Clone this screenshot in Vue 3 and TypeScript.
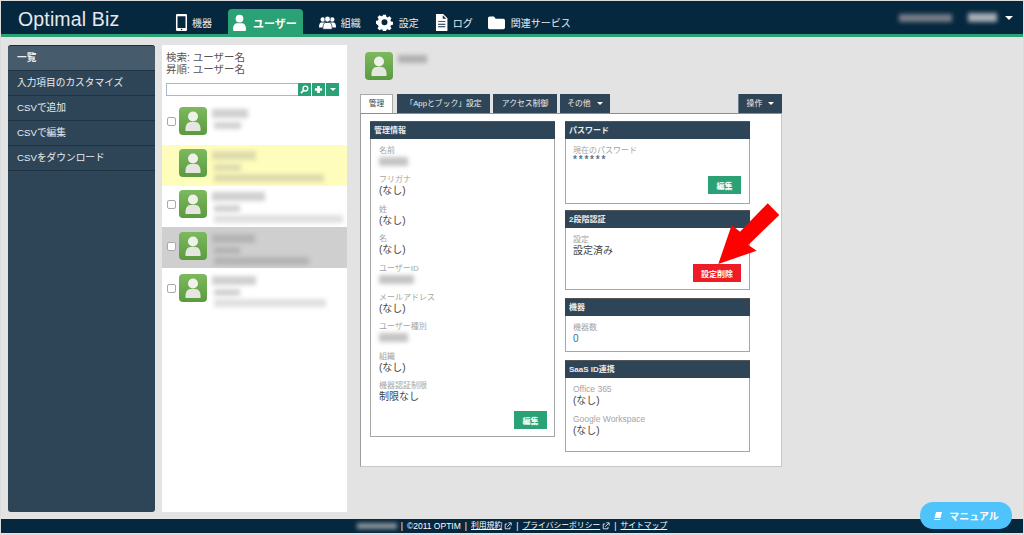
<script setup lang="ts">
interface NavItem { label: string; icon: string; active?: boolean }
const nav: NavItem[] = [
  { label: '機器', icon: 'phone' },
  { label: 'ユーザー', icon: 'user', active: true },
  { label: '組織', icon: 'group' },
  { label: '設定', icon: 'gear' },
  { label: 'ログ', icon: 'doc' },
  { label: '関連サービス', icon: 'folder' },
]
const menu = ['一覧', '入力項目のカスタマイズ', 'CSVで追加', 'CSVで編集', 'CSVをダウンロード']
const users = [
  { w: [36, 27], cls: '', check: true },
  { w: [44, 27, 110], cls: 'yellow', check: false },
  { w: [53, 26, 129], cls: '', check: true },
  { w: [43, 26, 95], cls: 'gray', check: true },
  { w: [44, 26, 112], cls: '', check: true },
]
const fields = [
  { l: '名前', b: 29 },
  { l: 'フリガナ', v: '(なし)' },
  { l: '姓', v: '(なし)' },
  { l: '名', v: '(なし)' },
  { l: 'ユーザーID', b: 35 },
  { l: 'メールアドレス', v: '(なし)' },
  { l: 'ユーザー種別', b: 29 },
  { l: '組織', v: '(なし)' },
  { l: '機器認証制限', v: '制限なし' },
]
</script>

<template>
  <div class="page">
    <header class="top">
      <div class="logo">Optimal Biz</div>
      <nav class="nav">
        <a v-for="n in nav" :key="n.label" class="nav-item" :class="{ active: n.active, ['i-' + n.icon]: true }">
          <svg class="nav-ic" viewBox="0 0 20 20" fill="#fff">
            <template v-if="n.icon === 'phone'">
              <path fill-rule="evenodd" d="M5 0h10a1.500 1.500 0 0 1 1.500 1.500v17A1.500 1.500 0 0 1 15 20H5a1.500 1.500 0 0 1-1.500-1.500v-17A1.500 1.500 0 0 1 5 0zM5.300 2.500v14h9.400v-14z" />
              <circle cx="10" cy="18.200" r=".9" fill="#06283f" />
            </template>
            <template v-else-if="n.icon === 'user'">
              <circle cx="10" cy="5.500" r="4.500" />
              <path d="M2.500 19.500c-.6-6 2-8.500 4.500-8.500h6c2.500 0 5.100 2.500 4.500 8.500a2 2 0 0 1-1 .5h-13a2 2 0 0 1-1-.5z" />
            </template>
            <template v-else-if="n.icon === 'group'">
              <circle cx="4.500" cy="6.500" r="2.700" />
              <circle cx="15.500" cy="6.500" r="2.700" />
              <path d="M0 16c0-4 1-6 3-6h3c2 0 2 2 2 6zM12 16c0-4 0-6 2-6h3c2 0 3 2 3 6z" />
              <circle cx="10" cy="6" r="3.400" stroke="#06283f" stroke-width=".8" />
              <path d="M4.500 18c0-5 1.500-8 3.500-8h4c2 0 3.500 3 3.500 8z" stroke="#06283f" stroke-width=".8" />
            </template>
            <template v-else-if="n.icon === 'gear'">
              <path fill-rule="evenodd" d="M8.200 1h3.600l.5 2.500 1.700.7 2.200-1.400 2.500 2.500-1.400 2.200.7 1.700 2.500.5v3.600l-2.500.5-.7 1.700 1.400 2.200-2.500 2.500-2.200-1.400-1.700.7-.5 2.500H8.200l-.5-2.500-1.700-.7-2.200 1.400-2.500-2.500 1.400-2.200-.7-1.700L-.5 12V8.400L2 7.900l.7-1.700-1.400-2.200 2.500-2.500L6 2.900l1.700-.7zM10 6.500a3.700 3.700 0 1 0 0 7.400 3.700 3.700 0 0 0 0-7.400z" transform="translate(0.500 0) scale(.95)" />
            </template>
            <template v-else-if="n.icon === 'doc'">
              <path fill-rule="evenodd" d="M3.500 0h8.500l5 5v15h-13.500zM11.500 1.500v4h4zM6 8.500v1h8.500v-1zM6 11.500v1h8.500v-1zM6 14.500v1h8.500v-1z" />
            </template>
            <template v-else>
              <path d="M0 5a2 2 0 0 1 2-2h5l2 2.500h9a2 2 0 0 1 2 2V16a2 2 0 0 1-2 2H2a2 2 0 0 1-2-2z" />
            </template>
          </svg>
          <span>{{ n.label }}</span>
        </a>
      </nav>
      <div class="account">
        <i class="blur b1"></i>
        <i class="blur b2"></i>
        <b class="caret"></b>
      </div>
    </header>

    <main class="main">
      <aside class="side">
        <div v-for="(m, i) in menu" :key="m" class="side-row" :class="{ cur: i === 0 }">{{ m }}</div>
      </aside>

      <section class="list">
        <div class="list-head">
          <div>検索: ユーザー名</div>
          <div>昇順: ユーザー名</div>
        </div>
        <div class="search">
          <div class="search-input"></div>
          <button class="sbtn s1">
            <svg viewBox="0 0 10 10" width="9" height="9" fill="none" stroke="#fff" stroke-width="1.500"><circle cx="6" cy="4" r="2.700" /><path d="M4 6L1 9" stroke-width="2" /></svg>
          </button>
          <button class="sbtn">
            <svg viewBox="0 0 10 10" width="9" height="9" fill="#fff"><path d="M3.500 1h3v2.500H9v3H6.500V9h-3V6.500H1v-3h2.500z" /></svg>
          </button>
          <button class="sbtn"><b class="caret small"></b></button>
        </div>
        <div class="rows">
          <div v-for="(u, i) in users" :key="i" class="urow" :class="u.cls">
            <span class="check" :class="{ hide: !u.check }"></span>
            <svg class="avatar" viewBox="0 0 28 28">
              <defs>
                <linearGradient :id="'g' + i" x1="0" y1="0" x2="0" y2="1">
                  <stop offset="0" stop-color="#7cb95f" />
                  <stop offset="1" stop-color="#5c9a40" />
                </linearGradient>
              </defs>
              <rect width="28" height="28" rx="4" :fill="'url(#g' + i + ')'" />
              <circle cx="14" cy="9.500" r="5" fill="#f1f1ec" />
              <path d="M6.500 24c-.5-6 2-9 5-9h5c3 0 5.500 3 5 9z" fill="#e6e6e0" />
            </svg>
            <div class="uinfo">
              <i v-for="(w, j) in u.w" :key="j" class="blur" :class="'l' + j" :style="{ width: w + 'px' }"></i>
            </div>
          </div>
        </div>
      </section>

      <section class="detail">
        <div class="dhead">
          <svg class="avatar" viewBox="0 0 28 28">
            <defs>
              <linearGradient id="gm" x1="0" y1="0" x2="0" y2="1">
                <stop offset="0" stop-color="#7cb95f" />
                <stop offset="1" stop-color="#5c9a40" />
              </linearGradient>
            </defs>
            <rect width="28" height="28" rx="4" fill="url(#gm)" />
            <circle cx="14" cy="9.500" r="5" fill="#f1f1ec" />
            <path d="M6.500 24c-.5-6 2-9 5-9h5c3 0 5.500 3 5 9z" fill="#e6e6e0" />
          </svg>
          <i class="blur dname"></i>
        </div>

        <div class="tabs">
          <div class="tab on t1">管理</div>
          <div class="tab t2">「Appとブック」設定</div>
          <div class="tab t3">アクセス制御</div>
          <div class="tab t4">その他 <b class="caret small"></b></div>
          <div class="tab t5">操作 <b class="caret small"></b></div>
        </div>

        <div class="panel">
          <div class="col">
            <article class="card left">
              <h3>管理情報</h3>
              <div class="fields">
                <div v-for="f in fields" :key="f.l" class="field">
                  <div class="lab">{{ f.l }}</div>
                  <div v-if="f.v" class="val">{{ f.v }}</div>
                  <i v-else class="blur fblur" :style="{ width: f.b + 'px' }"></i>
                </div>
              </div>
              <div class="act"><button class="btn">編集</button></div>
            </article>
          </div>
          <div class="col rcol">
            <article class="card pw">
              <h3>パスワード</h3>
              <div class="fields">
                <div class="lab">現在のパスワード</div>
                <div class="stars">******</div>
              </div>
              <div class="act"><button class="btn">編集</button></div>
            </article>
            <article class="card tw">
              <h3>2段階認証</h3>
              <div class="fields">
                <div class="lab">設定</div>
                <div class="val">設定済み</div>
              </div>
              <div class="act"><button class="btn red">設定削除</button></div>
            </article>
            <article class="card dv">
              <h3>機器</h3>
              <div class="fields">
                <div class="lab">機器数</div>
                <div class="val blue">0</div>
              </div>
            </article>
            <article class="card sa">
              <h3>SaaS ID連携</h3>
              <div class="fields">
                <div class="field">
                  <div class="lab">Office 365</div>
                  <div class="val">(なし)</div>
                </div>
                <div class="field">
                  <div class="lab">Google Workspace</div>
                  <div class="val">(なし)</div>
                </div>
              </div>
            </article>
          </div>
        </div>
      </section>
    </main>

    <footer class="foot">
      <i class="blur fb"></i>
      <span class="sep">|</span>
      <span>©2011 OPTIM</span>
      <span class="sep">|</span>
      <a>利用規約</a>
      <svg class="ext" viewBox="0 0 10 10" fill="none" stroke="#fff"><path d="M7.500 6v2.500h-6v-6H4" /><path d="M4 6l4.500-4.500M5.500 1h3.500v3.500" /></svg>
      <span class="sep">|</span>
      <a>プライバシーポリシー</a>
      <svg class="ext" viewBox="0 0 10 10" fill="none" stroke="#fff"><path d="M7.500 6v2.500h-6v-6H4" /><path d="M4 6l4.500-4.500M5.500 1h3.500v3.500" /></svg>
      <span class="sep">|</span>
      <a>サイトマップ</a>
    </footer>

    <svg class="arrow" width="1024" height="535" viewBox="0 0 1024 535">
      <polygon points="767.7,203.3 779.3,215 748.3,245 756.7,250.700 718.3,264 731.7,225 740,231.700" fill="#ff0000" />
    </svg>

    <button class="manual">
      <svg viewBox="0 0 10 10" width="10" height="10" fill="#fff"><path d="M3 1h6L7.500 7H1.500zM1 8h6.500l-.3 1H1.500z" /></svg>
      マニュアル
    </button>
  </div>
</template>

<style>
html, body { margin: 0; padding: 0; }
</style>

<style scoped>
.page {
  position: relative;
  box-sizing: border-box;
  width: 1024px;
  height: 535px;
  display: flex;
  flex-direction: column;
  overflow: hidden;
  background: #e3e3e3;
  border: 1px solid #dcdcdc;
  font-family: "Liberation Sans", "Noto Sans CJK JP", sans-serif;
  color: #444;
}
.top {
  height: 36px;
  box-sizing: border-box;
  flex: none;
  display: flex;
  align-items: flex-end;
  background: #06283f;
  border-bottom: 3px solid #2aa275;
}
.logo {
  width: 172px;
  flex: none;
  padding-left: 17px;
  box-sizing: border-box;
  align-self: center;
  margin-top: 3px;
  font-size: 19.500px;
  letter-spacing: .15px;
  color: #e6e9ec;
}
.nav { display: flex; height: 25px; }
.nav-item {
  display: flex;
  align-items: center;
  gap: 5px;
  padding-top: 2px;
  box-sizing: border-box;
  font-size: 10px;
  color: #e8ebee;
  margin-right: 15px;
}
.nav-item.active {
  background: #2aa275;
  border-radius: 4px 4px 0 0;
  padding: 2px 6px 0 3px;
  font-weight: 700;
  font-size: 11px;
  color: #fff;
  margin-left: 1px;
  margin-right: 16px;
}
.nav-ic { width: 17px; height: 17px; flex: none; }
.i-phone { gap: 2px; }
.i-gear { gap: 6px; margin-right: 14px; }
.i-doc { gap: 3px; }
.i-folder { gap: 6px; }
.account {
  margin-left: auto;
  display: flex;
  align-items: center;
  height: 33px;
  padding-right: 10px;
}
.blur { display: block; background: #b4b4b4; filter: blur(2px); }
.b1 { width: 53px; height: 8px; background: #777d86; }
.b2 { width: 29px; height: 9px; margin-left: 16px; background: #a8adb3; }
.caret {
  display: inline-block;
  width: 0;
  height: 0;
  border-left: 4px solid transparent;
  border-right: 4px solid transparent;
  border-top: 4px solid #fff;
  margin-left: 8px;
}
.caret.small {
  border-left-width: 3px;
  border-right-width: 3px;
  border-top-width: 3px;
  margin-left: 4px;
  vertical-align: middle;
}
.main {
  flex: 1;
  min-height: 0;
  display: flex;
  padding: 8px 0 7px 7px;
  gap: 7px;
}
.side {
  width: 147px;
  box-sizing: border-box;
  flex: none;
  background: #2e4558;
  border-top: 1px solid #1b2f40;
  border-radius: 3px;
  color: #e9ecef;
  font-size: 9.700px;
}
.side-row {
  height: 25px;
  box-sizing: border-box;
  line-height: 23px;
  padding-left: 9px;
  border-bottom: 1px solid #1d3344;
}
.side-row.cur { background: #465b6c; font-weight: 700; border-radius: 3px 3px 0 0; }
.list {
  width: 185px;
  flex: none;
  background: #fff;
  box-sizing: border-box;
  padding-top: 6px;
}
.list-head {
  padding-left: 4px;
  font-size: 10.500px;
  line-height: 12px;
  color: #555;
}
.search {
  display: flex;
  margin: 8px 0 0 4px;
  height: 13px;
  gap: 1px;
}
.search-input {
  width: 132px;
  box-sizing: border-box;
  border: 1px solid #a8b7cf;
  border-right: 0;
  margin-right: -1px;
}
.sbtn {
  width: 13px;
  height: 13px;
  padding: 0;
  border: 0;
  background: #2aa275;
  display: flex;
  align-items: center;
  justify-content: center;
}
.sbtn .caret { margin: 0; }
.rows { margin-top: 7px; }
.urow {
  height: 41.700px;
  box-sizing: border-box;
  display: flex;
  align-items: flex-start;
  padding: 4px 0 0 5px;
}
.urow.yellow { background: #fffdbb; }
.urow.gray { background: #cfcfcf; height: 41px; margin-top: -1px; padding-top: 5px; }
.urow:last-child { padding-top: 6px; }
.check {
  box-sizing: border-box;
  width: 9px;
  height: 9px;
  margin-top: 10px;
  border: 1px solid #aaa;
  border-radius: 2px;
  background: #fff;
  flex: none;
}
.check.hide { visibility: hidden; }
.avatar { width: 28px; height: 28px; flex: none; }
.urow .avatar { margin-left: 3px; }
.uinfo { margin-left: 5px; padding-top: 2px; }
.uinfo .l0 { height: 9px; background: #d0d0d0; }
.uinfo .l1 { height: 7px; margin: 4px 0 0 2px; background: #d2d2d2; }
.uinfo .l2 { height: 8px; margin: 3px 0 0 2px; background: #e0e0e0; }
.yellow .uinfo i { background: #dedcae; }
.gray .uinfo i { background: #b4b4b4; }
.detail {
  width: 422px;
  flex: none;
  margin-left: 6px;
}
.dhead {
  display: flex;
  height: 49px;
  padding: 7px 0 0 5px;
  box-sizing: border-box;
  align-items: flex-start;
}
.dname { width: 29px; height: 8px; margin: 3px 0 0 5px; background: #b0b0b0; }
.tabs { display: flex; height: 19px; gap: 3px; }
.tab {
  background: #2e4558;
  color: #e9ecef;
  font-size: 7.800px;
  line-height: 19px;
  text-align: center;
  box-sizing: border-box;
}
.tab.on { background: #fff; color: #444; border: 1px solid #aaa; border-bottom: 0; line-height: 18px; }
.t1 { width: 33px; margin-right: 1px; }
.t2 { width: 93px; }
.t3 { width: 64px; }
.t4 { width: 50px; }
.t5 { width: 44px; margin-left: auto; border-left: 1px solid #6d7f8e; }
.panel {
  box-sizing: border-box;
  height: 354px;
  background: #fff;
  border: 1px solid #c8c8c8;
  border-top-color: #8e8e8e;
  border-left-color: #9c9c9c;
  padding: 7px 0 0 9px;
  display: flex;
  gap: 10px;
}
.col { width: 185px; display: flex; flex-direction: column; }
.card {
  position: relative;
  box-sizing: border-box;
  border: 1px solid #a6a6a6;
  border-top: 0;
  background: #fff;
}
.card h3 {
  margin: 0 -1px;
  height: 18px;
  line-height: 17px;
  padding-left: 4px;
  background: #2e4558;
  border-top: 1px solid #555;
  box-sizing: border-box;
  font-size: 8px;
  font-weight: 700;
  color: #e9ecef;
}
.fields { padding: 6px 8px 0; }
.rcol .fields { padding-left: 7px; }
.left { height: 316px; }
.field { height: 29.400px; }
.lab { font-size: 8px; line-height: 11px; color: #a5a5a5; }
.sa .lab { font-size: 8.500px; }
.val { font-size: 10px; line-height: 11px; color: #444; }
.blue { color: #3c6e9e; }
.fblur { height: 9px; margin-top: 1px; background: #c4c4c4; }
.stars { font-size: 10px; line-height: 8px; font-weight: 700; color: #5d7490; letter-spacing: 1.800px; }
.act { position: absolute; right: 8px; bottom: 8px; }
.left .act { right: 7px; bottom: 7px; }
.btn {
  display: block;
  width: 33px;
  height: 18px;
  padding: 0;
  border: 0;
  background: #2aa275;
  color: #fff;
  font: 700 8px "Liberation Sans", "Noto Sans CJK JP", sans-serif;
}
.btn.red { width: 48px; background: #ee1c25; }
.pw { height: 83px; margin-bottom: 6px; }
.pw .act { bottom: 9px; }
.tw { height: 80px; margin-bottom: 8px; }
.tw .act { bottom: 7px; }
.dv { height: 54px; margin-bottom: 8px; }
.sa { height: 92px; }
.sa .field { height: 29.500px; }
.foot {
  height: 14px;
  flex: none;
  margin-bottom: 1px;
  background: #06283f;
  color: #fff;
  font-size: 8.500px;
  line-height: 14px;
  display: flex;
  align-items: center;
  justify-content: center;
}
.foot a { text-decoration: underline; font-size: 7.800px; }
.fb { width: 40px; height: 6px; background: #8d949b; }
.sep { margin: 0 4px; }
.ext { width: 8px; height: 8px; margin-left: 2px; }
.arrow { position: absolute; left: -1px; top: -1px; pointer-events: none; }
.manual {
  position: absolute;
  left: 919px;
  top: 501px;
  width: 92px;
  height: 27px;
  padding: 0;
  border: 0;
  border-radius: 13px;
  background: #4fc3fb;
  color: #fff;
  font: 700 10px "Liberation Sans", "Noto Sans CJK JP", sans-serif;
  display: flex;
  align-items: center;
  justify-content: center;
  gap: 6px;
}
</style>
